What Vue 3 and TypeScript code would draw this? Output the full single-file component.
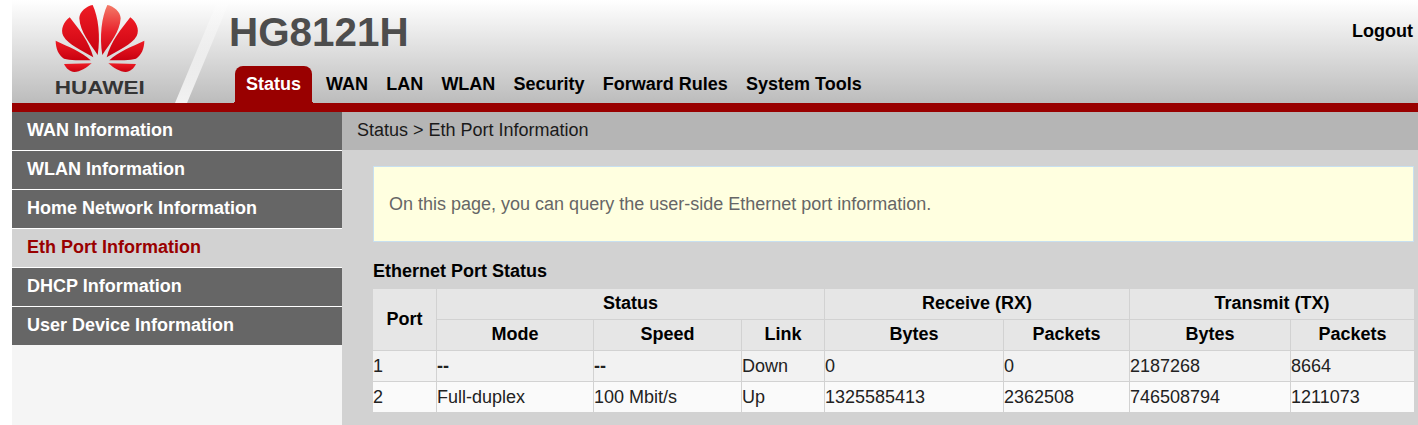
<script setup lang="ts">
interface PortRow {
  port: string
  mode: string
  speed: string
  link: string
  rxBytes: string
  rxPackets: string
  txBytes: string
  txPackets: string
}

const navItems: string[] = ['WAN', 'LAN', 'WLAN', 'Security', 'Forward Rules', 'System Tools']

const menu: { label: string; active?: boolean }[] = [
  { label: 'WAN Information' },
  { label: 'WLAN Information' },
  { label: 'Home Network Information' },
  { label: 'Eth Port Information', active: true },
  { label: 'DHCP Information' },
  { label: 'User Device Information' },
]

const columns: number[] = [63, 156, 147, 82, 178, 125, 160, 123]

const rows: PortRow[] = [
  { port: '1', mode: '--', speed: '--', link: 'Down', rxBytes: '0', rxPackets: '0', txBytes: '2187268', txPackets: '8664' },
  { port: '2', mode: 'Full-duplex', speed: '100 Mbit/s', link: 'Up', rxBytes: '1325585413', rxPackets: '2362508', txBytes: '746508794', txPackets: '1211073' },
]
</script>

<template>
  <div class="page">
    <header class="header">
      <svg class="slash" width="60" height="103" viewBox="0 0 60 103" aria-hidden="true">
        <defs>
          <linearGradient id="slashFill" x1="0" y1="1" x2="0" y2="0">
            <stop offset="0" stop-color="#f2f2f2" />
            <stop offset="1" stop-color="#ffffff" stop-opacity="0.2" />
          </linearGradient>
        </defs>
        <path d="M0 103 L43 0 L55 0 L12 103 Z" fill="url(#slashFill)" />
      </svg>
      <div class="logo">
        <svg width="120" height="100" viewBox="0 0 360 300" aria-label="Huawei logo">
          <defs>
            <linearGradient id="petal" x1="0" y1="0" x2="0" y2="1">
              <stop offset="0" stop-color="#ee1c25" />
              <stop offset="1" stop-color="#c8000f" />
            </linearGradient>
            <linearGradient id="petalLight" x1="0" y1="0" x2="0" y2="1">
              <stop offset="0" stop-color="#f47a68" />
              <stop offset="0.55" stop-color="#e8202a" />
              <stop offset="1" stop-color="#cc0010" />
            </linearGradient>
          </defs>
          <g class="petals">
            <path fill="url(#petal)" d="M173 165 C150 130 120 95 118 55 C118 35 140 18 158 15 C175 50 182 110 173 165 Z" />
            <path fill="url(#petal)" d="M160 172 C125 150 85 135 70 108 C60 88 72 65 89 52 C115 85 148 125 160 172 Z" />
            <path fill="url(#petal)" d="M152 181 C120 181 90 181 72 176 C56 166 47 145 47 122 C85 140 125 155 152 181 Z" />
            <path fill="url(#petal)" d="M155 190 L72 192 C78 205 90 216 103 216 C120 216 140 203 155 190 Z" />
            <path fill="url(#petalLight)" d="M187 165 C210 130 240 95 242 55 C242 35 220 18 202 15 C185 50 178 110 187 165 Z" />
            <path fill="url(#petal)" d="M200 172 C235 150 275 135 290 108 C300 88 288 65 271 52 C245 85 212 125 200 172 Z" />
            <path fill="url(#petal)" d="M208 181 C240 181 270 181 288 176 C304 166 313 145 313 122 C275 140 235 155 208 181 Z" />
            <path fill="url(#petal)" d="M205 190 L288 192 C282 205 270 216 257 216 C240 216 220 203 205 190 Z" />
          </g>
          <text class="wordmark" x="44" y="281" textLength="270" lengthAdjust="spacingAndGlyphs">HUAWEI</text>
        </svg>
      </div>
      <div class="head-main">
        <h1 class="title">HG8121H</h1>
        <nav class="nav">
          <a class="tab">Status</a>
          <a v-for="item in navItems" :key="item" class="nav-item">{{ item }}</a>
        </nav>
      </div>
      <a class="logout">Logout</a>
    </header>

    <div class="body">
      <aside class="side">
        <a v-for="item in menu" :key="item.label" class="menu-item" :class="{ active: item.active }">{{ item.label }}</a>
      </aside>
      <main class="content">
        <div class="crumb">Status &gt; Eth Port Information</div>
        <div class="panel">
          <div class="notice">On this page, you can query the user-side Ethernet port information.</div>
          <div class="section-title">Ethernet Port Status</div>
          <table class="ports">
            <colgroup>
              <col v-for="(w, i) in columns" :key="i" :style="{ width: w + 'px' }" />
            </colgroup>
            <thead>
              <tr>
                <th rowspan="2">Port</th>
                <th colspan="3">Status</th>
                <th colspan="2">Receive (RX)</th>
                <th colspan="2">Transmit (TX)</th>
              </tr>
              <tr>
                <th>Mode</th>
                <th>Speed</th>
                <th>Link</th>
                <th>Bytes</th>
                <th>Packets</th>
                <th>Bytes</th>
                <th>Packets</th>
              </tr>
            </thead>
            <tbody>
              <tr v-for="row in rows" :key="row.port">
                <td>{{ row.port }}</td>
                <td :class="{ empty: row.mode === '--' }">{{ row.mode }}</td>
                <td :class="{ empty: row.speed === '--' }">{{ row.speed }}</td>
                <td>{{ row.link }}</td>
                <td>{{ row.rxBytes }}</td>
                <td>{{ row.rxPackets }}</td>
                <td>{{ row.txBytes }}</td>
                <td>{{ row.txPackets }}</td>
              </tr>
            </tbody>
          </table>
        </div>
      </main>
    </div>
  </div>
</template>

<style>
html,
body {
  margin: 0;
  background: #ffffff;
  overflow: hidden;
}
</style>

<style scoped>
.page {
  height: 425px;
  padding-left: 12px;
  box-sizing: border-box;
  display: flex;
  flex-direction: column;
  font-family: "Liberation Sans", Arial, sans-serif;
  font-size: 18px;
  color: #000;
  overflow: hidden;
}

.header {
  position: relative;
  flex: none;
  height: 103px;
  display: flex;
  background: linear-gradient(to bottom, #ffffff 0%, #bcbcbc 100%);
  border-bottom: 9px solid #990000;
}

.slash {
  position: absolute;
  left: 163px;
  top: 0;
}

.logo {
  flex: none;
  width: 217px;
  padding-left: 28px;
  box-sizing: border-box;
}

.logo svg {
  display: block;
}

.petals {
  filter: blur(0.8px);
}

.wordmark {
  font-family: "Liberation Sans", Arial, sans-serif;
  font-size: 56px;
  font-weight: 700;
  fill: #353535;
}

.head-main {
  position: relative;
  flex: 1;
  display: flex;
  flex-direction: column;
  justify-content: space-between;
}

.title {
  margin: 9px 0 0;
  font-size: 40.4px;
  line-height: 46px;
  font-weight: 700;
  color: #4d4d4d;
}

.nav {
  display: flex;
  align-items: flex-end;
  margin-left: 6px;
  font-weight: 700;
}

.tab {
  position: relative;
  width: 77px;
  height: 37px;
  line-height: 36px;
  box-sizing: border-box;
  padding-left: 11px;
  margin-right: 14px;
  color: #ffffff;
  background: #990000;
  border-radius: 8px 8px 0 0;
}

.tab::before,
.tab::after {
  content: "";
  position: absolute;
  bottom: 0;
  width: 3px;
  height: 3px;
}

.tab::before {
  left: -3px;
  background: radial-gradient(circle at 0 0, transparent 3px, #990000 3px);
}

.tab::after {
  right: -3px;
  background: radial-gradient(circle at 100% 0, transparent 3px, #990000 3px);
}

.nav-item {
  height: 37px;
  line-height: 36px;
  margin-right: 18.2px;
}

.logout {
  position: absolute;
  right: 5px;
  top: 21px;
  font-weight: 700;
  line-height: 20px;
}

.body {
  flex: 1;
  display: flex;
  min-height: 0;
}

.side {
  flex: none;
  width: 330px;
  background: #f5f5f5;
}

.menu-item {
  display: block;
  height: 38px;
  line-height: 36px;
  padding-left: 15px;
  border-bottom: 1px solid #ffffff;
  font-weight: 700;
  color: #ffffff;
  background: #666666;
}

.menu-item:last-child {
  border-bottom: 0;
}

.menu-item.active {
  color: #990000;
  background: #d2d2d2;
}

.content {
  flex: 1;
  min-width: 0;
  background: #d2d2d2;
}

.crumb {
  height: 38px;
  line-height: 36px;
  padding-left: 15px;
  color: #1a1a1a;
  background: #b5b5b5;
}

.panel {
  padding: 16px 4px 0 31px;
}

.notice {
  height: 76px;
  line-height: 75px;
  padding-left: 15px;
  box-sizing: border-box;
  color: #666666;
  background: #ffffe0;
  border: 1px solid #c8e0f0;
}

.section-title {
  margin-top: 18px;
  height: 28px;
  line-height: 22px;
  font-weight: 700;
}

.ports {
  width: 1043px;
  margin: 0 -1px;
  table-layout: fixed;
  border-collapse: separate;
  border-spacing: 1px;
}

.ports th,
.ports td {
  height: 30px;
  padding: 0;
  box-sizing: border-box;
  line-height: 28px;
}

.ports th {
  padding-bottom: 2px;
  text-align: center;
  font-weight: 700;
  background: #e6e6e6;
}

.ports td {
  color: #222222;
}

.ports td.empty {
  font-weight: 700;
}

.ports tbody tr:nth-child(odd) td {
  background: #f2f2f2;
}

.ports tbody tr:nth-child(even) td {
  background: #fafafa;
}
</style>
